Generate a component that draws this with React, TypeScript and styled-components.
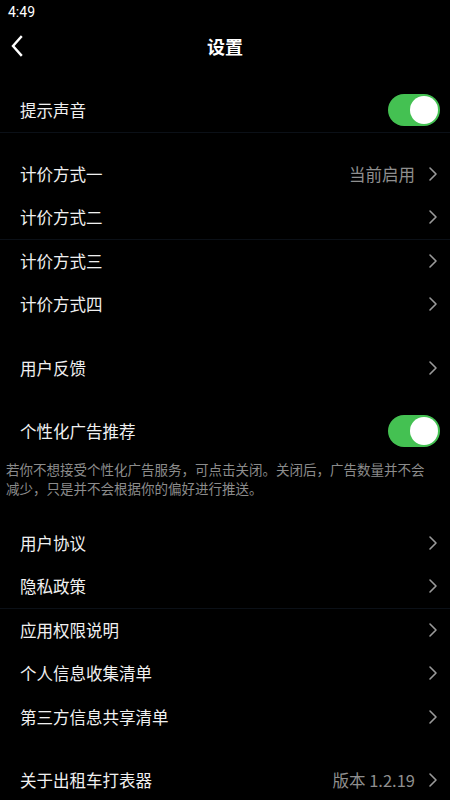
import React, { useState } from 'react';
import styled, { createGlobalStyle } from 'styled-components';

const GlobalStyle = createGlobalStyle`
  html, body {
    margin: 0;
    padding: 0;
    background: #000;
  }
  body {
    font-family: "Noto Sans", "Noto Sans CJK SC", sans-serif;
    color: #fff;
  }
  * {
    box-sizing: border-box;
  }
`;

const Page = styled.div`
  width: 450px;
  min-height: 800px;
  background: #000;
  display: flex;
  flex-direction: column;
  overflow: hidden;
`;

const StatusBar = styled.div`
  height: 24px;
  padding: 3px 0 0 8px;
  font-family: "Roboto", "Noto Sans", sans-serif;
  font-size: 14px;
  font-weight: 400;
  line-height: 18px;
  color: #fff;
`;

const Header = styled.div`
  height: 44px;
  display: flex;
  align-items: center;
  justify-content: center;
  position: relative;
`;

const BackButton = styled.button`
  position: absolute;
  left: 6px;
  top: 10px;
  width: 22px;
  height: 24px;
  padding: 0;
  border: none;
  background: transparent;
  display: flex;
  align-items: center;
  justify-content: center;
  cursor: pointer;
`;

const Title = styled.h1`
  margin: 0;
  font-size: 18px;
  font-weight: 700;
  font-family: "Noto Sans CJK SC", sans-serif;
`;

const Group = styled.div<{ top?: number }>`
  margin-top: ${({ top }) => (top ?? 20)}px;
  display: flex;
  flex-direction: column;
`;

const Row = styled.div<{ divider?: boolean }>`
  height: 43.5px;
  padding: 0 12px 0 20px;
  display: flex;
  align-items: center;
  justify-content: space-between;
  border-bottom: 1px solid ${({ divider }) => (divider ? '#0b1017' : 'transparent')};
  cursor: pointer;
`;

const Label = styled.span`
  font-family: "Noto Sans CJK SC", sans-serif;
  font-size: 16.5px;
  color: #f0f0f0;
`;

const Trailing = styled.div`
  display: flex;
  align-items: center;
  gap: 13px;
`;

const Value = styled.span`
  font-family: "Noto Sans CJK SC", sans-serif;
  font-size: 16.5px;
  color: #8f8f8f;
`;

const Track = styled.div<{ on: boolean }>`
  width: 52px;
  height: 32px;
  margin-right: -2px;
  border-radius: 16px;
  padding: 2px;
  background: ${({ on }) => (on ? '#44c152' : '#3a3a3c')};
  display: flex;
  justify-content: ${({ on }) => (on ? 'flex-end' : 'flex-start')};
`;

const Knob = styled.div`
  width: 28px;
  height: 28px;
  border-radius: 50%;
  background: #fff;
`;

const Note = styled.p`
  margin: 6px 0 0;
  padding: 0 20px 0 6px;
  font-family: "Noto Sans CJK SC", sans-serif;
  font-size: 13.5px;
  line-height: 19px;
  color: #8c8c8c;
`;

const Chevron = () => (
  <svg width="10" height="16" viewBox="0 0 10 16">
    <path d="M2 2 L8 8 L2 14" fill="none" stroke="#9a9a9a" strokeWidth="1.6" strokeLinecap="round" strokeLinejoin="round" />
  </svg>
);

const Toggle = ({ initial }: { initial: boolean }) => {
  const [on, setOn] = useState(initial);
  return (
    <Track on={on} onClick={() => setOn(!on)}>
      <Knob />
    </Track>
  );
};

interface LinkRowProps {
  label: string;
  value?: string;
  divider?: boolean;
}

const LinkRow = ({ label, value, divider }: LinkRowProps) => (
  <Row divider={divider}>
    <Label>{label}</Label>
    <Trailing>
      {value && <Value>{value}</Value>}
      <Chevron />
    </Trailing>
  </Row>
);

const App = () => (
  <Page>
    <GlobalStyle />
    <StatusBar>4:49</StatusBar>
    <Header>
      <BackButton>
        <svg width="14" height="22" viewBox="0 0 14 22">
          <path d="M11 2 L3 11 L11 20" fill="none" stroke="#fff" strokeWidth="2.4" strokeLinecap="square" />
        </svg>
      </BackButton>
      <Title>设置</Title>
    </Header>

    <Group top={21}>
      <Row divider>
        <Label>提示声音</Label>
        <Toggle initial />
      </Row>
    </Group>

    <Group>
      <LinkRow label="计价方式一" value="当前启用" />
      <LinkRow label="计价方式二" divider />
      <LinkRow label="计价方式三" />
      <LinkRow label="计价方式四" />
    </Group>

    <Group>
      <LinkRow label="用户反馈" />
    </Group>

    <Group>
      <Row>
        <Label>个性化广告推荐</Label>
        <Toggle initial />
      </Row>
      <Note>若你不想接受个性化广告服务，可点击关闭。关闭后，广告数量并不会减少，只是并不会根据你的偏好进行推送。</Note>
    </Group>

    <Group top={24}>
      <LinkRow label="用户协议" />
      <LinkRow label="隐私政策" divider />
      <LinkRow label="应用权限说明" />
      <LinkRow label="个人信息收集清单" />
      <LinkRow label="第三方信息共享清单" />
    </Group>

    <Group>
      <LinkRow label="关于出租车打表器" value="版本 1.2.19" />
    </Group>
  </Page>
);

export default App;
